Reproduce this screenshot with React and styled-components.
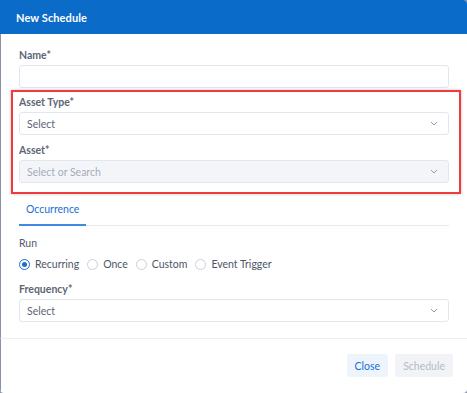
import React from "react";
import styled, { createGlobalStyle } from "styled-components";

const Global = createGlobalStyle`
  html, body { margin: 0; padding: 0; background: #8a93a4; }
  body { font-family: Lato, "Open Sans", "Liberation Sans", sans-serif; }
  * { box-sizing: border-box; }
`;

const Dialog = styled.div`
  width: 467px;
  height: 393px;
  background: #fff;
  border-radius: 0 4px 4px 4px;
  overflow: hidden;
  display: flex;
  flex-direction: column;
`;

const Header = styled.div`
  height: 34px;
  background: #0b6bc9;
  color: #fff;
  font-weight: 700;
  font-size: 11px;
  display: flex;
  align-items: center;
  padding: 0 16px;
  letter-spacing: 0.1px;
`;

const Body = styled.div`
  border-left: 1px solid #8a93a4;
  padding: 14px 18px 16px 18px;
  display: flex;
  flex-direction: column;
  border-bottom: 1px solid #eceff3;
`;

const Field = styled.div`
  display: flex;
  flex-direction: column;
  gap: 3px;
  margin-top: ${(p) => p.$mt || 0}px;
`;

const Label = styled.div`
  font-size: 10.5px;
  line-height: 14px;
  font-weight: 700;
  color: #5d6676;
`;

const Input = styled.div`
  height: 23px;
  border: 1px solid #e1e6ef;
  border-radius: 3px;
  background: ${(p) => (p.$disabled ? "#f3f5f9" : "#fff")};
  display: flex;
  align-items: center;
  justify-content: space-between;
  padding: 0 10px 0 7px;
  font-size: 10.5px;
  color: ${(p) => (p.$disabled ? "#a6adb9" : "#5c6574")};
`;

const Highlight = styled.div`
  margin: 2px -12px 0 -8px;
  padding: 3px 10px 9px 6px;
  border: 2px solid #ef3b3b;
  box-shadow: 0 0 3px rgba(0, 0, 0, 0.25);
  display: flex;
  flex-direction: column;
`;

const TabBar = styled.div`
  margin-top: 2px;
  display: flex;
  border-bottom: 1px solid #e6e9ef;
`;

const Tab = styled.div`
  padding: 6px 7px 8px 7px;
  font-size: 10.5px;
  line-height: 14px;
  color: #1b6fcf;
  border-bottom: 2px solid #3f8ae0;
  margin-bottom: -1px;
`;

const RunLabel = styled(Label)`
  margin-top: 10px;
  font-weight: 400;
  color: #515b6b;
`;

const RadioRow = styled.div`
  margin-top: 7px;
  display: flex;
  align-items: center;
  gap: 8px;
  height: 14px;
`;

const RadioItem = styled.label`
  display: flex;
  align-items: center;
  gap: 5px;
  font-size: 10.5px;
  color: #4d5665;
`;

const Circle = styled.span`
  width: 11px;
  height: 11px;
  border-radius: 50%;
  border: 1px solid ${(p) => (p.$on ? "#1f6fd0" : "#c9d0db")};
  display: inline-flex;
  align-items: center;
  justify-content: center;
  &::after {
    content: "";
    width: 5px;
    height: 5px;
    border-radius: 50%;
    background: ${(p) => (p.$on ? "#1f6fd0" : "transparent")};
  }
`;

const Footer = styled.div`
  flex: 1;
  border-left: 1px solid #8a93a4;
  display: flex;
  justify-content: flex-end;
  align-items: flex-start;
  gap: 7px;
  padding: 15px 14px 0 0;
`;

const Button = styled.button`
  height: 23px;
  border: none;
  border-radius: 3px;
  padding: 0 8px;
  font-family: inherit;
  font-size: 10.5px;
  background: ${(p) => (p.$primary ? "#f1f3f6" : "#edf4fc")};
  color: ${(p) => (p.$primary ? "#b4bcc8" : "#1c6fd1")};
`;

const Chevron = () => (
  <svg width="8" height="5" viewBox="0 0 8 5">
    <polyline points="1,1 4,4 7,1" fill="none" stroke="#8f9ab0" strokeWidth="1" />
  </svg>
);

const Select = ({ text, disabled }) => (
  <Input $disabled={disabled}>
    <span>{text}</span>
    <Chevron />
  </Input>
);

export default function App() {
  return (
    <>
      <Global />
      <Dialog>
        <Header>New Schedule</Header>
        <Body>
          <Field>
            <Label>Name*</Label>
            <Input />
          </Field>
          <Highlight>
            <Field>
              <Label>Asset Type*</Label>
              <Select text="Select" />
            </Field>
            <Field $mt={8}>
              <Label>Asset*</Label>
              <Select text="Select or Search" disabled />
            </Field>
          </Highlight>
          <TabBar>
            <Tab>Occurrence</Tab>
          </TabBar>
          <RunLabel>Run</RunLabel>
          <RadioRow>
            <RadioItem><Circle $on />Recurring</RadioItem>
            <RadioItem><Circle />Once</RadioItem>
            <RadioItem><Circle />Custom</RadioItem>
            <RadioItem><Circle />Event Trigger</RadioItem>
          </RadioRow>
          <Field $mt={11}>
            <Label>Frequency*</Label>
            <Select text="Select" />
          </Field>
        </Body>
        <Footer>
          <Button>Close</Button>
          <Button $primary>Schedule</Button>
        </Footer>
      </Dialog>
    </>
  );
}
